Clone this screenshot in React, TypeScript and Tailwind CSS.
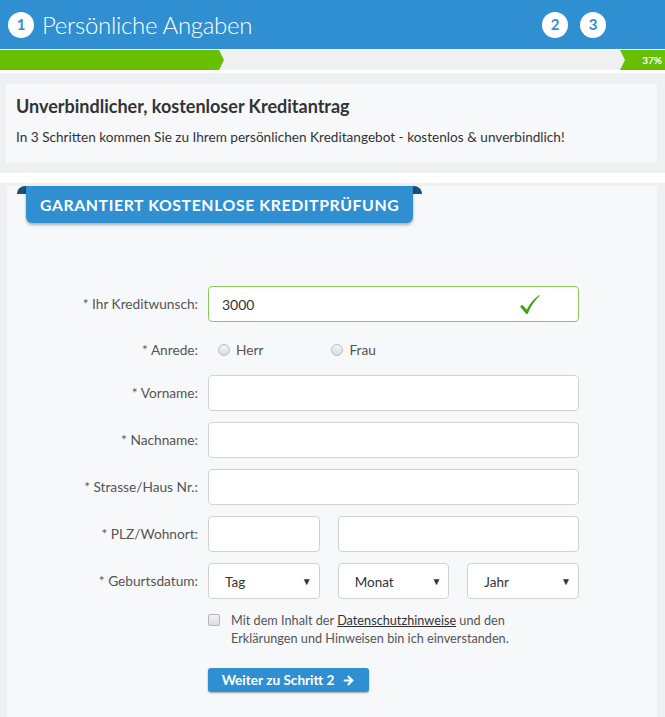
import React from 'react';
import { ArrowRight } from 'lucide-react';

const font = { fontFamily: 'Lato, "Open Sans", sans-serif' };

function StepCircle({ n }: { n: number }) {
  return (
    <div className="w-[26px] h-[26px] rounded-full bg-white flex items-center justify-center text-[#2f8fd1] text-[15px] font-bold leading-none">
      {n}
    </div>
  );
}

function Label({ children }: { children: React.ReactNode }) {
  return <div className="text-right text-[13.7px] text-[#555] leading-none">{children}</div>;
}

function Box({ className = '', valid = false, children }: { className?: string; valid?: boolean; children?: React.ReactNode }) {
  return (
    <div
      className={`h-[36px] bg-white border rounded-[4px] flex items-center ${valid ? 'border-[#8cc862]' : 'border-[#cfd3d7]'} ${className}`}
    >
      {children}
    </div>
  );
}

function SelectBox({ text }: { text: string }) {
  return (
    <Box className="justify-between pl-[16px] pr-[7px]">
      <span className="text-[13.5px] text-[#333] mt-[3px]">{text}</span>
      <span className="text-[10px] text-[#333]">▼</span>
    </Box>
  );
}

function Radio({ label }: { label: string }) {
  return (
    <div className="flex items-center gap-[6px]">
      <span className="w-[12px] h-[12px] rounded-full border border-[#b9bdc2] bg-gradient-to-b from-[#f4f4f4] to-[#d9dbde]" />
      <span className="text-[13.7px] text-[#555]">{label}</span>
    </div>
  );
}

function Row({ label, className = '', children }: { label: string; className?: string; children: React.ReactNode }) {
  return (
    <div className={`grid grid-cols-[191px_371px] gap-x-[10px] items-center ${className}`}>
      <Label>{label}</Label>
      {children}
    </div>
  );
}

export default function App() {
  return (
    <div className="w-[665px] min-h-[717px] bg-white overflow-hidden" style={font}>
      {/* Header */}
      <header className="h-[49px] bg-[#2f8fd1] flex items-center pl-[8px] pr-[59px]">
        <StepCircle n={1} />
        <h1 className="ml-[8px] text-[24px] font-light text-white leading-none tracking-[-0.3px]">Persönliche Angaben</h1>
        <div className="ml-auto flex items-center gap-[12px]">
          <StepCircle n={2} />
          <StepCircle n={3} />
        </div>
      </header>

      {/* Progress */}
      <div className="mt-[1px] h-[20px] bg-[#eff0f2] relative flex">
        <div className="w-[219px] h-full bg-[#66bf00]" />
        <div className="w-0 h-0 border-y-[10px] border-y-transparent border-l-[5px] border-l-[#66bf00]" />
        <div className="absolute right-0 top-0 h-full w-[45px] bg-[#66bf00] flex items-center justify-end pr-[3px]">
          <div className="absolute left-0 top-0 w-0 h-0 border-y-[10px] border-y-transparent border-l-[5px] border-l-[#eff0f2]" />
          <span className="text-[10px] font-bold text-white leading-none">37%</span>
        </div>
      </div>

      {/* Intro */}
      <section className="mt-[3px] bg-[#eff0f2] pt-[11px] pb-[10px] pl-[6px] pr-[8px]">
        <div className="bg-[#f7f8fa] h-[79px] px-[10px] pt-[13px]">
          <h2 className="text-[18px] font-bold text-[#333] leading-none">Unverbindlicher, kostenloser Kreditantrag</h2>
          <p className="mt-[16px] text-[13.6px] text-[#333] leading-none">
            In 3 Schritten kommen Sie zu Ihrem persönlichen Kreditangebot - kostenlos &amp; unverbindlich!
          </p>
        </div>
      </section>

      {/* Form */}
      <section className="mt-[10px] bg-[#eff0f2] pt-[10px] pl-[7px] pr-[8px]">
        <div className="bg-[#f7f8fa] pb-[30px]">
          <div className="relative ml-[19px] -mt-[7px] w-[387px]">
            <span className="absolute -left-[9px] top-0 w-[14px] h-[8px] rounded-tl-full bg-[#1d4f7a]" />
            <span className="absolute -right-[9px] top-0 w-[14px] h-[8px] rounded-tr-full bg-[#1d4f7a]" />
            <div className="relative h-[37px] bg-[#2f8fd1] rounded-b-[6px] shadow-[0_2px_3px_rgba(0,0,0,0.3)] flex items-center pl-[14px]">
              <span className="text-white text-[15.8px] font-bold tracking-[0.6px] leading-none">
                GARANTIERT KOSTENLOSE KREDITPRÜFUNG
              </span>
            </div>
          </div>

          <div className="mt-[63px] flex flex-col gap-[11px]">
            <Row label="* Ihr Kreditwunsch:">
              <Box valid className="justify-between pl-[13px] pr-[38px]">
                <span className="text-[14px] text-[#333]">3000</span>
                <svg width="21" height="21" viewBox="0 0 21 21">
                  <path d="M1 12.5 L3.2 10.8 L7.8 15.6 C11 9.5 15 4.6 20.2 1 L20.8 1.6 C15.6 6.5 11.6 12.6 8.6 20 L7.2 20 Z" fill="#3fa515" />
                </svg>
              </Box>
            </Row>

            <Row label="* Anrede:" className="pt-[3px]">
              <div className="h-[28px] flex items-center pl-[10px] gap-[68px]">
                <Radio label="Herr" />
                <Radio label="Frau" />
              </div>
            </Row>

            <Row label="* Vorname:">
              <Box />
            </Row>
            <Row label="* Nachname:">
              <Box />
            </Row>
            <Row label="* Strasse/Haus Nr.:">
              <Box />
            </Row>
            <Row label="* PLZ/Wohnort:">
              <div className="grid grid-cols-3 gap-[18px]">
                <Box />
                <Box className="col-span-2" />
              </div>
            </Row>
            <Row label="* Geburtsdatum:">
              <div className="grid grid-cols-3 gap-[18px]">
                <SelectBox text="Tag" />
                <SelectBox text="Monat" />
                <SelectBox text="Jahr" />
              </div>
            </Row>
          </div>

          <div className="ml-[201px] mt-[12px] flex items-start gap-[11px]">
            <span className="mt-[3px] w-[12px] h-[12px] shrink-0 rounded-[2px] border border-[#b3b7bc] bg-gradient-to-b from-[#f3f3f3] to-[#dcdee1]" />
            <p className="text-[12.7px] text-[#555] leading-[18px]">
              Mit dem Inhalt der <span className="underline text-[#333]">Datenschutzhinweise</span> und den
              <br />
              Erklärungen und Hinweisen bin ich einverstanden.
            </p>
          </div>

          <button className="ml-[201px] mt-[21px] h-[24px] w-[161px] bg-[#2f8fd1] rounded-[3px] shadow-[0_1px_2px_rgba(0,0,0,0.35)] flex items-center justify-center gap-[8px] text-white text-[13.6px] font-bold">
            <span>Weiter zu Schritt 2</span>
            <ArrowRight size={13} strokeWidth={4} />
          </button>
        </div>
      </section>
    </div>
  );
}
